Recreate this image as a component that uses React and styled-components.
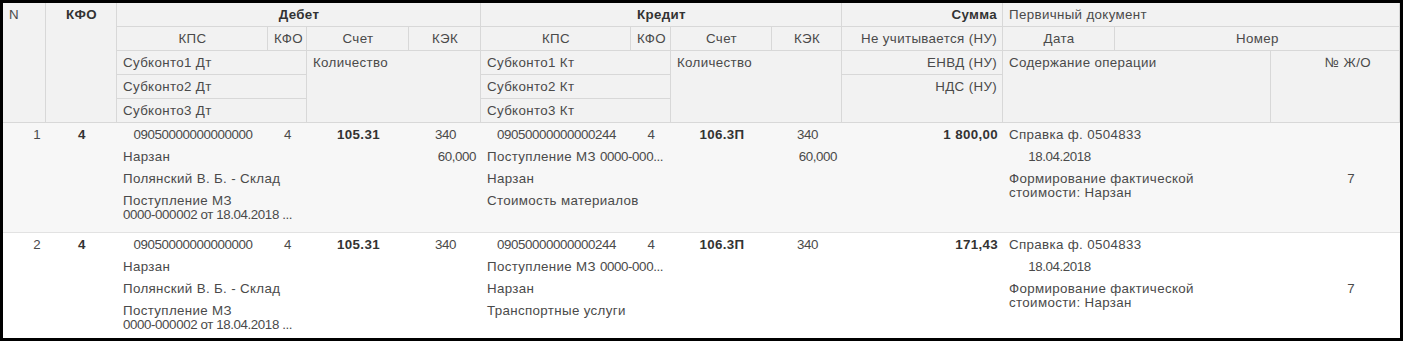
import React from "react";
import styled, { createGlobalStyle } from "styled-components";

const Global = createGlobalStyle`
  html, body { margin: 0; padding: 0; background: #fff; }
  * { box-sizing: border-box; }
`;

const COLS = "43px 71px 151px 39px 102px 72px 150px 40px 101px 70px 161px 112px 156px 129px";

const Frame = styled.div`
  width: 1403px;
  height: 341px;
  border: 3px solid #000;
  overflow: hidden;
  font-family: "Liberation Sans", Arial, sans-serif;
  font-size: 13.33px;
  letter-spacing: 0.35px;
  color: #4a4a4a;
  background: #fff;
`;

const Header = styled.div`
  display: grid;
  grid-template-columns: ${COLS};
  grid-template-rows: repeat(5, 24px);
  background: #f2f2f2;
`;

const HCell = styled.div`
  grid-column: ${(p) => p.$col};
  grid-row: ${(p) => p.$row};
  border-right: 1px solid #d8d8d8;
  border-bottom: 1px solid #d8d8d8;
  padding: 0 ${(p) => (p.$pr != null ? p.$pr : 5)}px 0 6px;
  line-height: 23px;
  text-align: ${(p) => p.$align || "left"};
  font-weight: ${(p) => (p.$bold ? 700 : 400)};
  color: ${(p) => (p.$bold ? "#333" : "#4a4a4a")};
  white-space: nowrap;
  overflow: hidden;
`;

const Row = styled.div`
  display: grid;
  grid-template-columns: ${COLS};
  grid-template-rows: 22px 22px 22px auto;
  min-height: 110px;
  padding-top: 1px;
  border-bottom: 1px solid #e2e2e2;
  background: ${(p) => p.$bg};
`;

const Cell = styled.div`
  grid-column: ${(p) => p.$col};
  grid-row: ${(p) => p.$row};
  padding: 4px ${(p) => (p.$pr != null ? p.$pr : 5)}px 0 6px;
  line-height: 14px;
  text-align: ${(p) => p.$align || "left"};
  font-weight: ${(p) => (p.$bold ? 700 : 400)};
  color: ${(p) => (p.$bold ? "#333" : "#4a4a4a")};
  letter-spacing: ${(p) => (p.$num ? "-0.4px" : "inherit")};
  white-space: nowrap;
  overflow: hidden;
`;

const NumText = styled.span`
  letter-spacing: -0.4px;
`;

const rows = [
  { n: "1", bg: "#f7f7f7", dtQty: "60,000", ktQty: "60,000", sum: "1 800,00", ktSub3: "Стоимость материалов" },
  { n: "2", bg: "#ffffff", dtQty: "", ktQty: "", sum: "171,43", ktSub3: "Транспортные услуги" },
];

function DataRow({ r }) {
  return (
    <Row $bg={r.bg}>
      <Cell $col="1" $row="1" $align="right">{r.n}</Cell>
      <Cell $col="2" $row="1" $align="center" $bold>4</Cell>

      <Cell $col="3" $row="1" $align="center" $num>09050000000000000</Cell>
      <Cell $col="4" $row="1" $align="center">4</Cell>
      <Cell $col="5" $row="1" $align="center" $bold>105.31</Cell>
      <Cell $col="6" $row="1" $align="center" $num>340</Cell>
      <Cell $col="3 / 5" $row="2">Нарзан</Cell>
      <Cell $col="5 / 7" $row="2" $align="right" $num>{r.dtQty}</Cell>
      <Cell $col="3 / 5" $row="3">Полянский В. Б. - Склад</Cell>
      <Cell $col="3 / 5" $row="4">
        Поступление МЗ
        <br />
        <NumText>0000-000002 от 18.04.2018 ...</NumText>
      </Cell>

      <Cell $col="7" $row="1" $align="center" $num>09050000000000244</Cell>
      <Cell $col="8" $row="1" $align="center">4</Cell>
      <Cell $col="9" $row="1" $align="center" $bold>106.3П</Cell>
      <Cell $col="10" $row="1" $align="center" $num>340</Cell>
      <Cell $col="7 / 9" $row="2">
        Поступление МЗ <NumText>0000-000...</NumText>
      </Cell>
      <Cell $col="9 / 11" $row="2" $align="right" $num>{r.ktQty}</Cell>
      <Cell $col="7 / 9" $row="3">Нарзан</Cell>
      <Cell $col="7 / 9" $row="4">{r.ktSub3}</Cell>

      <Cell $col="11" $row="1" $align="right" $bold>{r.sum}</Cell>

      <Cell $col="12 / 15" $row="1">Справка ф. 0504833</Cell>
      <Cell $col="12" $row="2" $align="center" $num>18.04.2018</Cell>
      <Cell $col="12 / 14" $row="3 / 5">
        Формирование фактической
        <br />
        стоимости: Нарзан
      </Cell>
      <Cell $col="14" $row="3" $align="right" $pr={45}>7</Cell>
    </Row>
  );
}

export default function App() {
  return (
    <>
      <Global />
      <Frame>
        <Header>
          <HCell $col="1" $row="1 / 6">N</HCell>
          <HCell $col="2" $row="1 / 6" $align="center" $bold>КФО</HCell>

          <HCell $col="3 / 7" $row="1" $align="center" $bold>Дебет</HCell>
          <HCell $col="3" $row="2" $align="center">КПС</HCell>
          <HCell $col="4" $row="2" $align="center">КФО</HCell>
          <HCell $col="5" $row="2" $align="center">Счет</HCell>
          <HCell $col="6" $row="2" $align="center">КЭК</HCell>
          <HCell $col="3 / 5" $row="3">Субконто1 Дт</HCell>
          <HCell $col="3 / 5" $row="4">Субконто2 Дт</HCell>
          <HCell $col="3 / 5" $row="5">Субконто3 Дт</HCell>
          <HCell $col="5 / 7" $row="3 / 6">Количество</HCell>

          <HCell $col="7 / 11" $row="1" $align="center" $bold>Кредит</HCell>
          <HCell $col="7" $row="2" $align="center">КПС</HCell>
          <HCell $col="8" $row="2" $align="center">КФО</HCell>
          <HCell $col="9" $row="2" $align="center">Счет</HCell>
          <HCell $col="10" $row="2" $align="center">КЭК</HCell>
          <HCell $col="7 / 9" $row="3">Субконто1 Кт</HCell>
          <HCell $col="7 / 9" $row="4">Субконто2 Кт</HCell>
          <HCell $col="7 / 9" $row="5">Субконто3 Кт</HCell>
          <HCell $col="9 / 11" $row="3 / 6">Количество</HCell>

          <HCell $col="11" $row="1" $align="right" $bold>Сумма</HCell>
          <HCell $col="11" $row="2" $align="right">Не учитывается (НУ)</HCell>
          <HCell $col="11" $row="3" $align="right">ЕНВД (НУ)</HCell>
          <HCell $col="11" $row="4 / 6" $align="right">НДС (НУ)</HCell>

          <HCell $col="12 / 15" $row="1">Первичный документ</HCell>
          <HCell $col="12" $row="2" $align="center">Дата</HCell>
          <HCell $col="13 / 15" $row="2" $align="center">Номер</HCell>
          <HCell $col="12 / 14" $row="3 / 6">Содержание операции</HCell>
          <HCell $col="14" $row="3 / 6" $align="right" $pr={28}>№ Ж/О</HCell>
        </Header>
        {rows.map((r) => (
          <DataRow key={r.n} r={r} />
        ))}
      </Frame>
    </>
  );
}
